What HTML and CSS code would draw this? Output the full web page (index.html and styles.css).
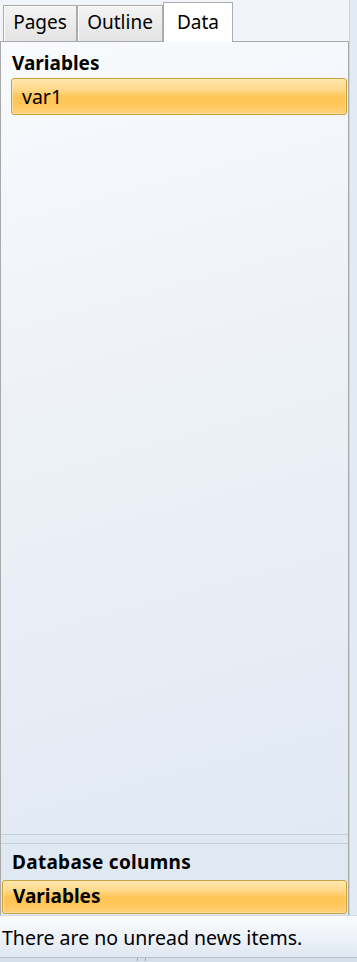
FILE: index.html
```html
<!DOCTYPE html>
<html>
<head>
<meta charset="utf-8">
<link rel="stylesheet" href="styles.css">
</head>
<body>
<div class="app">
  <div class="main">
    <div class="dock">
      <div class="tabs">
        <div class="tab tab-pages">Pages</div>
        <div class="tab tab-outline">Outline</div>
        <div class="tab tab-data active">Data</div>
      </div>
      <div class="frame">
        <div class="panel">
          <div class="heading">Variables</div>
          <div class="item">var1</div>
        </div>
        <div class="splitter"></div>
        <div class="db">
          <div class="heading db-heading">Database columns</div>
          <div class="item item-bold">Variables</div>
        </div>
      </div>
    </div>
    <div class="side"></div>
  </div>
  <div class="status">There are no unread news items.</div>
  <div class="status-foot"><span class="tick"></span><span class="tick tick-2"></span></div>
</div>
</body>
</html>
```

FILE: styles.css
```css
html, body {
  margin: 0;
  padding: 0;
}
body {
  width: 357px;
  height: 962px;
  overflow: hidden;
  font-family: "Noto Sans", "Open Sans", sans-serif;
  color: #000;
  background: linear-gradient(160deg, #f5f8fc 0%, #e4ebf4 60%, #dde6f1 100%);
}
.app {
  display: flex;
  flex-direction: column;
  height: 962px;
}
.main {
  display: flex;
  flex: 1;
  min-height: 0;
}
.dock {
  width: 349px;
  display: flex;
  flex-direction: column;
}
.side {
  flex: 1;
  border-left: 1px solid #c9d5e4;
  background: #e2eaf4;
}
.tabs {
  height: 41px;
  display: flex;
  align-items: flex-end;
  padding-left: 3px;
  box-sizing: border-box;
  background: #f1f5fa;
}
.tab {
  box-sizing: border-box;
  height: 36px;
  border: 1px solid #acacac;
  border-bottom: none;
  background: linear-gradient(#f4f4f4, #e3e3e3);
  box-shadow: inset 1px 1px 0 #fbfbfb;
  font-size: 19px;
  line-height: 33px;
  text-align: center;
}
.tab-pages { width: 74px; }
.tab-outline { width: 86px; }
.tab-data { width: 70px; }
.tab.active {
  height: 40px;
  margin-bottom: -1px;
  background: #fff;
  box-shadow: none;
  line-height: 38px;
  position: relative;
  z-index: 1;
}
.frame {
  flex: 1;
  display: flex;
  flex-direction: column;
  border: 1px solid #a9a9a9;
  border-bottom: none;
  min-height: 0;
}
.panel {
  flex: 1;
  background: linear-gradient(165deg, #f8fafd 0%, #eef2f8 40%, #e1e9f3 100%);
  border-bottom: 1px solid #c3cfdd;
  padding-top: 9px;
}
.splitter {
  height: 8px;
  background: #e0e8f2;
  border-bottom: 1px solid #c3cfdd;
}
.db {
  background: #e0e8f2;
  padding-top: 6px;
  padding-bottom: 1px;
}
.heading {
  font-weight: bold;
  font-size: 19px;
  line-height: 24px;
  padding-left: 11px;
}
.db-heading {
  padding-bottom: 6px;
  letter-spacing: 0.3px;
}
.item {
  margin: 3px 1px 0 10px;
  height: 37px;
  box-sizing: border-box;
  border: 1px solid #c9a13a;
  border-radius: 3px;
  background: linear-gradient(#ffe7ad 0%, #ffd98a 30%, #ffc453 52%, #ffc759 70%, #ffd27a 100%);
  box-shadow: inset 0 0 0 1px rgba(255, 240, 200, 0.5);
  font-size: 19.5px;
  line-height: 35px;
  padding-left: 10px;
}
.db .item {
  margin: 0 1px 0 1px;
  height: 34px;
  line-height: 30px;
}
.item-bold {
  font-weight: bold;
  font-size: 19px;
}
.status {
  height: 42px;
  box-sizing: border-box;
  border-top: 1px solid #d3dbe6;
  background: linear-gradient(#fafbfd 0%, #eef3f9 50%, #dfe7f2 100%);
  font-size: 19.5px;
  line-height: 38px;
  padding-top: 3px;
  padding-left: 2px;
}
.status-foot {
  height: 4px;
  border-top: 1px solid #b5bfcc;
  background: #d5dfeb;
  position: relative;
}
.tick {
  position: absolute;
  left: 137px;
  top: 0;
  width: 1px;
  height: 3px;
  background: #a0a8b4;
}
.tick-2 {
  left: 145px;
}
```
